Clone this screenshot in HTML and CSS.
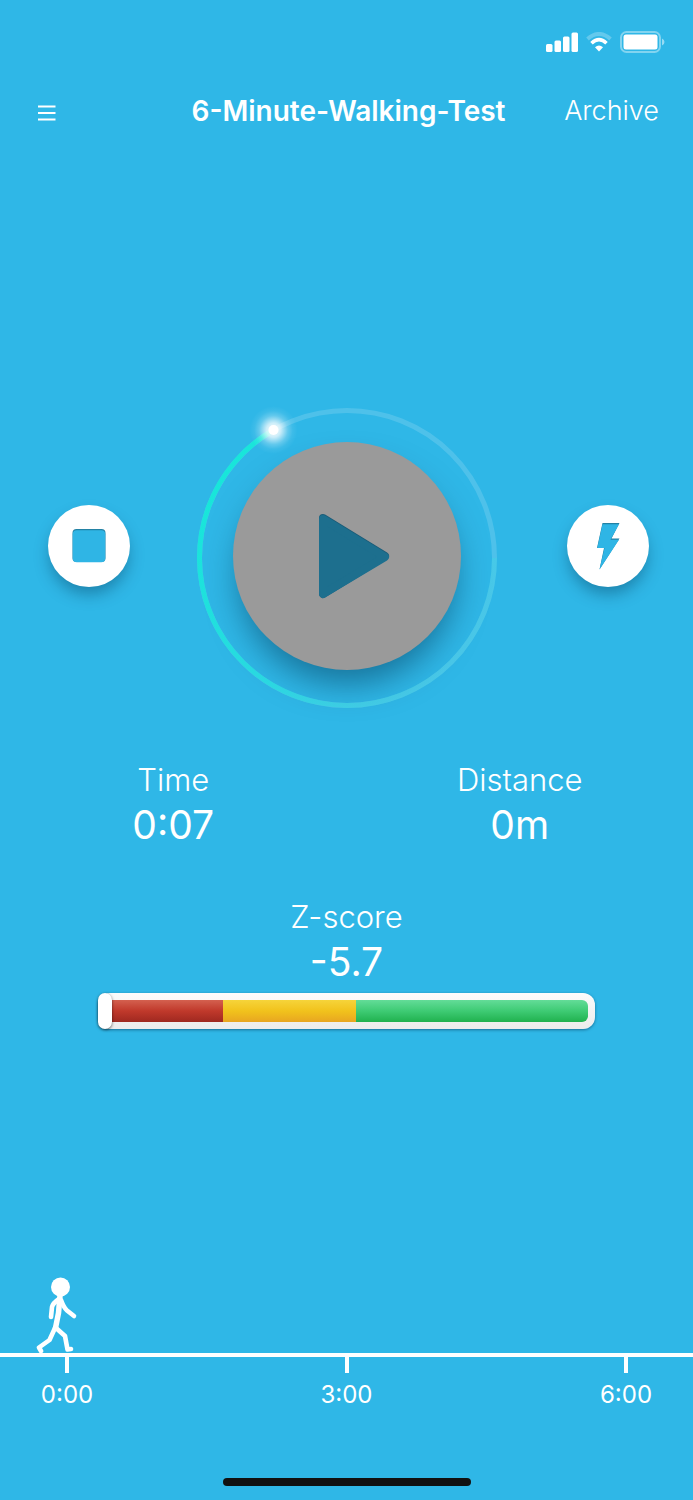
FILE: index.html
```
<!DOCTYPE html>
<html lang="en">
<head>
  <meta charset="UTF-8" />
  <meta name="viewport" content="width=device-width,initial-scale=1" />
  <title>6-Minute-Walking-Test</title>
  <link rel="stylesheet" href="styles.css">
</head>
<body>
  <!-- Status bar -->
  <div class="status-bar">
    <svg width="32" height="20" viewBox="0 0 32 20" fill="#fff" role="img" aria-label="Signal">
      <rect x="0" y="12" width="6.5" height="8" rx="1.5"/>
      <rect x="8.5" y="8.5" width="6.5" height="11.5" rx="1.5"/>
      <rect x="17" y="4.5" width="6.5" height="15.5" rx="1.5"/>
      <rect x="25.5" y="0.5" width="6.5" height="19.5" rx="1.5"/>
    </svg>
    <svg width="26" height="20" viewBox="0 0 26 20" role="img" aria-label="Wi-Fi">
      <path d="M1.5 7 Q13 -3 24.5 7" fill="none" stroke="#fff" stroke-opacity=".25" stroke-width="4"/>
      <path d="M5.5 11.2 Q13 4.2 20.5 11.2" fill="none" stroke="#fff" stroke-width="3.6"/>
      <path d="M9 15.2 Q13 11.8 17 15.2 L13 19.5 Z" fill="#fff"/>
    </svg>
    <svg width="45" height="22" viewBox="0 0 45 22" role="img" aria-label="Battery">
      <rect x="1" y="1" width="39" height="20" rx="5.5" fill="none" stroke="#fff" stroke-opacity=".4" stroke-width="2"/>
      <rect x="3.5" y="3.5" width="34" height="15" rx="2.5" fill="#fff"/>
      <path d="M42 7.5 q2.5 1 2.5 3.5 t-2.5 3.5 z" fill="#fff" fill-opacity=".5"/>
    </svg>
  </div>

  <!-- Navigation -->
  <header class="navbar">
    <button class="menu-btn" aria-label="Menu">
      <svg width="18" height="16" viewBox="0 0 18 16" stroke="#fff" stroke-width="2.2">
        <path d="M0 1.5H17.500M0 8H17.500M0 14.5H17.500"/>
      </svg>
    </button>
    <h1>6-Minute-Walking-Test</h1>
    <a class="archive-link" href="#">Archive</a>
  </header>

  <main>
    <!-- Stop / play / lap controls -->
    <div class="controls">
      <div class="control-left">
        <button class="round-btn" aria-label="Stop">
          <svg width="34" height="34" viewBox="0 0 34 34">
            <rect x="0.5" y="0" width="33" height="33" rx="4" fill="#2382a5"/>
            <rect x="0.8" y="1.2" width="32.4" height="32" rx="4" fill="#2fb5e5"/>
          </svg>
        </button>
      </div>
      <div class="dial">
        <svg class="ring" viewBox="0 0 302 302" aria-hidden="true">
          <defs>
            <linearGradient id="arc" gradientUnits="userSpaceOnUse" x1="20" y1="80" x2="270" y2="230">
              <stop offset="0" stop-color="#18e6da"/>
              <stop offset=".5" stop-color="#22dedf" stop-opacity=".8"/>
              <stop offset="1" stop-color="#3cd6e4" stop-opacity=".3"/>
            </linearGradient>
            <radialGradient id="glow">
              <stop offset="0" stop-color="#fff"/>
              <stop offset=".3" stop-color="#fff" stop-opacity=".75"/>
              <stop offset=".6" stop-color="#fff" stop-opacity=".25"/>
              <stop offset=".8" stop-color="#fff" stop-opacity=".07"/>
              <stop offset="1" stop-color="#fff" stop-opacity="0"/>
            </radialGradient>
          </defs>
          <circle cx="151" cy="151" r="147.5" fill="none" stroke="#fff" stroke-opacity=".15" stroke-width="5"/>
          <path d="M298.5 151 A147.5 147.5 0 1 1 77.5 23" fill="none" stroke="url(#arc)" stroke-width="5"/>
          <circle cx="77.5" cy="23" r="24" fill="url(#glow)"/>
          <circle cx="77.5" cy="23" r="5" fill="#fff"/>
        </svg>
        <button class="play-btn" aria-label="Play">
          <svg width="72" height="86" viewBox="0 0 72 86" stroke-width="8" stroke-linejoin="round">
            <path d="M5 5 L67 43 L5 81 Z" fill="#1b5c78" stroke="#1b5c78"/>
            <path d="M5 6 L67 44 L5 81 Z" fill="#1d6f8e" stroke="#1d6f8e"/>
          </svg>
        </button>
      </div>
      <div class="control-right">
        <button class="round-btn" aria-label="Lightning">
          <svg width="24" height="48" viewBox="0 0 24 48">
            <path d="M6.5 1 H23.5 L15.5 16.500 H23.5 L3.5 47.500 L8 26 H1 Z" fill="#2382a5"/>
            <path d="M6.5 2.300 H23 L14.5 17.800 H23 L3.5 47.500 L8.5 26 H1.3 Z" fill="#2fb5e5"/>
          </svg>
        </button>
      </div>
    </div>

    <!-- Results -->
    <dl class="stats">
      <div class="stat">
        <dt>Time</dt>
        <dd>0:07</dd>
      </div>
      <div class="stat">
        <dt>Distance</dt>
        <dd>0m</dd>
      </div>
      <div class="stat stat-wide">
        <dt>Z-score</dt>
        <dd>-5.7</dd>
      </div>
    </dl>

    <div class="score-bar" role="img" aria-label="Z-score -5.7">
      <div class="score-track">
        <span class="low"></span>
        <span class="mid"></span>
        <span class="high"></span>
      </div>
      <div class="score-knob"></div>
    </div>
  </main>

  <!-- Walking timeline -->
  <section class="timeline">
    <svg class="walker" width="42" height="76" viewBox="16 12 42 76" fill="none" stroke="#fff" stroke-width="4.6" stroke-linecap="round" stroke-linejoin="round" role="img" aria-label="Walker">
      <circle cx="40.5" cy="22" r="9.5" fill="#fff" stroke="none"/>
      <path d="M40 31 L38.5 48 L35.5 63" stroke-width="5.5"/>
      <path d="M39 34 Q33 38 32 42 L31 52"/>
      <path d="M41 35 Q44 43 47 45.5 L54 51"/>
      <path d="M35 63 L29.5 75 L19 82.5 L21 86"/>
      <path d="M36 63 L45 71 L47.5 84.5 L51 84"/>
    </svg>
    <div class="ticks">
      <span>0:00</span>
      <span>3:00</span>
      <span>6:00</span>
    </div>
  </section>

  <div class="home-indicator"></div>
</body>
</html>
```
FILE: styles.css
```
* { box-sizing:border-box; }
body { font-family:Inter, "Noto Sans", sans-serif; margin:0; min-height:100vh; background:#2fb7e7; color:#fff; display:flex; flex-direction:column; }
button { border:none; padding:0; cursor:pointer; background:none; }
svg { display:block; }

/* Status bar */
.status-bar { display:flex; justify-content:flex-end; align-items:center; gap:8px; padding:31px 28px 0 0; }

/* Navigation */
.navbar { display:grid; grid-template-columns:1fr auto 1fr; align-items:center; padding:0 34px 0 38px; margin-top:40px; height:36px; }
.navbar h1 { margin:0; font-size:28px; font-weight:600; line-height:36px; }
.menu-btn { justify-self:start; padding-top:4px; }
.archive-link { justify-self:end; color:#fff; font-size:27px; font-weight:300; line-height:36px; text-decoration:none; }

/* Controls */
.controls { display:grid; grid-template-columns:1fr auto 1fr; align-items:center; margin-top:278px; }
.control-left { padding:0 0 24px 48px; }
.control-right { padding:0 44px 24px 0; display:flex; justify-content:flex-end; }
.round-btn { width:82px; height:82px; border-radius:50%; background:#fff; display:flex; align-items:center; justify-content:center; box-shadow:0 9px 16px -2px rgba(0,50,80,.4); }
.dial { display:grid; place-items:center; }
.ring, .play-btn { grid-area:1 / 1; }
.ring { width:302px; height:302px; overflow:visible; z-index:1; pointer-events:none; }
.play-btn { width:228px; height:228px; margin-bottom:4px; padding-left:14px; border-radius:50%; background:#9a9a9a; display:flex; align-items:center; justify-content:center; box-shadow:0 20px 32px -6px rgba(0,50,80,.5); }

/* Results */
.stats { display:grid; grid-template-columns:1fr 1fr; row-gap:48px; margin:50px 0 0; text-align:center; }
.stat-wide { grid-column:1 / -1; }
.stat dt { font-size:31px; font-weight:300; line-height:42px; }
.stat dd { margin:0; font-size:39px; line-height:47px; }

.score-bar { position:relative; margin:8px 98px 0; height:36px; padding:7px; border-radius:12px; background:linear-gradient(#fbfbfb, #ececec); box-shadow:0 1px 3px rgba(0,40,70,.5); }
.score-track { display:flex; height:22px; border-radius:6px; overflow:hidden; }
.low { flex:118; background:linear-gradient(#d4604f, #c0392b 50%, #9f2820); }
.mid { flex:132; background:linear-gradient(#f6d43a, #f1c21c 50%, #e8a621); }
.high { flex:232; background:linear-gradient(#63dc98, #3ecb74 50%, #20b14e); }
.score-knob { position:absolute; left:0; top:0; bottom:0; width:14px; border-radius:7px; background:#fff; box-shadow:0 1px 3px rgba(0,0,0,.6); }

/* Timeline */
.timeline { margin-top:auto; }
.walker { margin-left:36px; }
.ticks { display:flex; justify-content:space-between; padding:0 27px; border-top:4px solid #fff; }
.ticks span { width:80px; text-align:center; font-size:24px; line-height:44px; }
.ticks span::before { content:""; display:block; width:4px; height:16px; margin:0 auto; background:#fff; }

.home-indicator { width:248px; height:8px; margin:61px auto 14px; border-radius:4px; background:#111; }
```
